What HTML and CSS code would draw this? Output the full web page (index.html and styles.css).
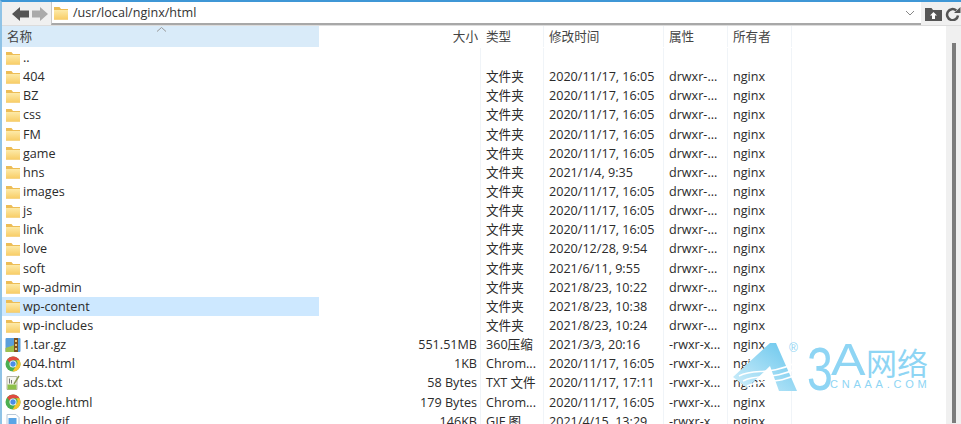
FILE: index.html
```html
<!DOCTYPE html>
<html lang="en">
<head>
    <meta charset="UTF-8">
    <meta name="viewport" content="width=device-width, initial-scale=1.0">
    <title>/usr/local/nginx/html</title>
    <link rel="stylesheet" href="styles.css">
</head>
<body>
    <svg class="defs" width="0" height="0">
        <defs>
            <linearGradient id="folderFill" x1="0" y1="0" x2="0" y2="1">
                <stop offset="0" stop-color="#fdeaa8"/>
                <stop offset="1" stop-color="#f8cd66"/>
            </linearGradient>
            <linearGradient id="logoFill" x1="0" y1="1" x2="1" y2="0">
                <stop offset="0" stop-color="#d4f0fb"/>
                <stop offset="1" stop-color="#63c4ec"/>
            </linearGradient>
            <symbol id="folder" viewBox="0 0 16 16">
                <path d="M1 2h5.500l1.500 2h7v10.500H1z" fill="#edbd55"/>
                <path d="M1 5h14v9.500H1z" fill="url(#folderFill)"/>
            </symbol>
            <symbol id="zip" viewBox="0 0 16 16">
                <rect x="0.500" y="1" width="15" height="14" rx="1" fill="#5a9fdc"/>
                <path d="M0.500 11l9-3v7h-9z" fill="#9cc04e"/>
                <rect x="9" y="1" width="4" height="14" fill="#7d5220"/>
                <rect x="10" y="3" width="2" height="2" fill="#e8c878"/>
                <rect x="10" y="7" width="2" height="2" fill="#e8c878"/>
                <rect x="10" y="11" width="2" height="2" fill="#e8c878"/>
            </symbol>
            <symbol id="chrome" viewBox="0 0 16 16">
                <circle cx="8" cy="8" r="7.500" fill="#4caf50"/>
                <path d="M8 .5a7.500 7.500 0 0 1 6.500 3.750H8a3.750 3.750 0 0 0-3.400 2.200L2.100 3.400A7.500 7.500 0 0 1 8 .5z" fill="#e04a3f"/>
                <path d="M14.500 4.250A7.500 7.500 0 0 1 7.500 15.500l3.300-5.200a3.750 3.750 0 0 0 .4-6.050z" fill="#f7c52d"/>
                <circle cx="8" cy="8" r="3.500" fill="#fff"/>
                <circle cx="8" cy="8" r="2.700" fill="#4a8de8"/>
            </symbol>
            <symbol id="txt" viewBox="0 0 16 16">
                <path d="M2 1.500h10v13H2z" fill="#f5f5ee" stroke="#b5b5a8"/>
                <path d="M2.500 9.500h9v5h-9z" fill="#8cc04a"/>
                <path d="M4.500 3.500v5M6.500 5v3.500" stroke="#777" fill="none"/>
                <path d="M9 9l5-8" stroke="#8a9a50" stroke-width="1.500" fill="none"/>
            </symbol>
            <symbol id="gif" viewBox="0 0 16 16">
                <path d="M2 1.500h9l3 3v10H2z" fill="#fff" stroke="#b8c8d8"/>
                <rect x="3.500" y="5" width="8" height="6" fill="#5aa5e6"/>
            </symbol>
        </defs>
    </svg>

    <div class="window">
        <div class="toolbar">
            <svg class="nav-arrows" width="36" height="14" viewBox="0 0 36 14">
                <path d="M0 7l8-7v3.500h9v7H8V14z" fill="#555"/>
                <path d="M36 7l-8-7v3.500h-8v7h8V14z" fill="#aaa"/>
            </svg>
            <div class="path-box">
                <svg class="icon" width="16" height="16"><use href="#folder"/></svg>
                <span class="path-text">/usr/local/nginx/html</span>
                <svg class="chevron" width="10" height="6" viewBox="0 0 10 6"><path d="M1 1l4 4 4-4" fill="none" stroke="#888"/></svg>
            </div>
            <svg class="tool-icon folder-up" width="17" height="14" viewBox="0 0 17 14">
                <path d="M0 1h6.500l1.500 2h9v11H0z" fill="#555"/>
                <path d="M8.500 5l3.500 3.500H10V12H7V8.500H5z" fill="#fff"/>
            </svg>
            <svg class="tool-icon refresh" width="16" height="14" viewBox="0 0 16 14">
                <path d="M13 8.500a5.500 5.500 0 1 1-1.800-5" fill="none" stroke="#555" stroke-width="2.500"/>
                <path d="M9 6h6.500V0z" fill="#555"/>
            </svg>
        </div>

        <div class="content">
            <div class="list">
                <div class="row head">
                    <div class="cell name sorted">名称<svg class="sort" width="11" height="5" viewBox="0 0 11 5"><path d="M1 4.500l4.500-4 4.500 4" fill="none" stroke="#999"/></svg></div>
                    <div class="cell size">大小</div>
                    <div class="cell">类型</div>
                    <div class="cell">修改时间</div>
                    <div class="cell">属性</div>
                    <div class="cell">所有者</div>
                </div>
                <div class="row"><div class="cell name"><svg class="icon" width="16" height="16"><use href="#folder"/></svg>..</div><div class="cell size"></div><div class="cell"></div><div class="cell"></div><div class="cell"></div><div class="cell"></div></div>
                <div class="row"><div class="cell name"><svg class="icon" width="16" height="16"><use href="#folder"/></svg>404</div><div class="cell size"></div><div class="cell">文件夹</div><div class="cell">2020/11/17, 16:05</div><div class="cell">drwxr-...</div><div class="cell">nginx</div></div>
                <div class="row"><div class="cell name"><svg class="icon" width="16" height="16"><use href="#folder"/></svg>BZ</div><div class="cell size"></div><div class="cell">文件夹</div><div class="cell">2020/11/17, 16:05</div><div class="cell">drwxr-...</div><div class="cell">nginx</div></div>
                <div class="row"><div class="cell name"><svg class="icon" width="16" height="16"><use href="#folder"/></svg>css</div><div class="cell size"></div><div class="cell">文件夹</div><div class="cell">2020/11/17, 16:05</div><div class="cell">drwxr-...</div><div class="cell">nginx</div></div>
                <div class="row"><div class="cell name"><svg class="icon" width="16" height="16"><use href="#folder"/></svg>FM</div><div class="cell size"></div><div class="cell">文件夹</div><div class="cell">2020/11/17, 16:05</div><div class="cell">drwxr-...</div><div class="cell">nginx</div></div>
                <div class="row"><div class="cell name"><svg class="icon" width="16" height="16"><use href="#folder"/></svg>game</div><div class="cell size"></div><div class="cell">文件夹</div><div class="cell">2020/11/17, 16:05</div><div class="cell">drwxr-...</div><div class="cell">nginx</div></div>
                <div class="row"><div class="cell name"><svg class="icon" width="16" height="16"><use href="#folder"/></svg>hns</div><div class="cell size"></div><div class="cell">文件夹</div><div class="cell">2021/1/4, 9:35</div><div class="cell">drwxr-...</div><div class="cell">nginx</div></div>
                <div class="row"><div class="cell name"><svg class="icon" width="16" height="16"><use href="#folder"/></svg>images</div><div class="cell size"></div><div class="cell">文件夹</div><div class="cell">2020/11/17, 16:05</div><div class="cell">drwxr-...</div><div class="cell">nginx</div></div>
                <div class="row"><div class="cell name"><svg class="icon" width="16" height="16"><use href="#folder"/></svg>js</div><div class="cell size"></div><div class="cell">文件夹</div><div class="cell">2020/11/17, 16:05</div><div class="cell">drwxr-...</div><div class="cell">nginx</div></div>
                <div class="row"><div class="cell name"><svg class="icon" width="16" height="16"><use href="#folder"/></svg>link</div><div class="cell size"></div><div class="cell">文件夹</div><div class="cell">2020/11/17, 16:05</div><div class="cell">drwxr-...</div><div class="cell">nginx</div></div>
                <div class="row"><div class="cell name"><svg class="icon" width="16" height="16"><use href="#folder"/></svg>love</div><div class="cell size"></div><div class="cell">文件夹</div><div class="cell">2020/12/28, 9:54</div><div class="cell">drwxr-...</div><div class="cell">nginx</div></div>
                <div class="row"><div class="cell name"><svg class="icon" width="16" height="16"><use href="#folder"/></svg>soft</div><div class="cell size"></div><div class="cell">文件夹</div><div class="cell">2021/6/11, 9:55</div><div class="cell">drwxr-...</div><div class="cell">nginx</div></div>
                <div class="row"><div class="cell name"><svg class="icon" width="16" height="16"><use href="#folder"/></svg>wp-admin</div><div class="cell size"></div><div class="cell">文件夹</div><div class="cell">2021/8/23, 10:22</div><div class="cell">drwxr-...</div><div class="cell">nginx</div></div>
                <div class="row"><div class="cell name selected"><svg class="icon" width="16" height="16"><use href="#folder"/></svg>wp-content</div><div class="cell size"></div><div class="cell">文件夹</div><div class="cell">2021/8/23, 10:38</div><div class="cell">drwxr-...</div><div class="cell">nginx</div></div>
                <div class="row"><div class="cell name"><svg class="icon" width="16" height="16"><use href="#folder"/></svg>wp-includes</div><div class="cell size"></div><div class="cell">文件夹</div><div class="cell">2021/8/23, 10:24</div><div class="cell">drwxr-...</div><div class="cell">nginx</div></div>
                <div class="row"><div class="cell name"><svg class="icon" width="16" height="16"><use href="#zip"/></svg>1.tar.gz</div><div class="cell size">551.51MB</div><div class="cell">360压缩</div><div class="cell">2021/3/3, 20:16</div><div class="cell">-rwxr-x...</div><div class="cell">nginx</div></div>
                <div class="row"><div class="cell name"><svg class="icon" width="16" height="16"><use href="#chrome"/></svg>404.html</div><div class="cell size">1KB</div><div class="cell">Chrom...</div><div class="cell">2020/11/17, 16:05</div><div class="cell">-rwxr-x...</div><div class="cell">nginx</div></div>
                <div class="row"><div class="cell name"><svg class="icon" width="16" height="16"><use href="#txt"/></svg>ads.txt</div><div class="cell size">58 Bytes</div><div class="cell">TXT 文件</div><div class="cell">2020/11/17, 17:11</div><div class="cell">-rwxr-x...</div><div class="cell">nginx</div></div>
                <div class="row"><div class="cell name"><svg class="icon" width="16" height="16"><use href="#chrome"/></svg>google.html</div><div class="cell size">179 Bytes</div><div class="cell">Chrom...</div><div class="cell">2020/11/17, 16:05</div><div class="cell">-rwxr-x...</div><div class="cell">nginx</div></div>
                <div class="row"><div class="cell name"><svg class="icon" width="16" height="16"><use href="#gif"/></svg>hello.gif</div><div class="cell size">146KB</div><div class="cell">GIF 图</div><div class="cell">2021/4/15, 13:29</div><div class="cell">-rwxr-x...</div><div class="cell">nginx</div></div>
            </div>
            <div class="scrollbar"><div class="thumb"></div></div>
        </div>
    </div>

    <!-- watermark sits over the list -->
    <div class="watermark">
        <svg class="wm-logo" width="66" height="50" viewBox="0 0 66 50">
            <path d="M0 35L37 1h6l21 48H46L37 24 14 46z" fill="url(#logoFill)"/>
            <path d="M6 34c16-8 30 0 56-13M10 39c16-8 30 0 54-13M14 44c16-8 30 0 52-13" fill="none" stroke="#fff" stroke-width="1.500"/>
        </svg>
        <span class="wm-reg">®</span>
        <span class="wm-three">3</span>
        <div class="wm-words">
            <div class="wm-title"><span class="wm-a">A</span>网络</div>
            <span class="wm-sub">CNAAA.COM</span>
        </div>
    </div>
</body>
</html>
```

FILE: styles.css
```css
* {
    box-sizing: border-box;
}

body {
    margin: 0;
    width: 961px;
    height: 424px;
    overflow: hidden;
    position: relative;
    background: #fff;
    color: #2b2b2b;
    font-family: "Open Sans", "Noto Sans CJK SC", sans-serif;
    font-size: 12.6px;
}

.defs {
    position: absolute;
}

.window {
    height: 424px;
    display: flex;
    flex-direction: column;
    border-top: 2px solid #3f97d6;
    border-left: 2px solid #8fc3e6;
}

.toolbar {
    height: 24px;
    flex: none;
    display: flex;
    align-items: center;
    background: #f0f0f0;
    border-bottom: 1px solid #dcdcdc;
}

.nav-arrows {
    margin: 0 3px 0 10px;
}

.path-box {
    width: 870px;
    height: 23px;
    display: flex;
    align-items: center;
    padding: 0 6px 0 1px;
    background: #fff;
    border-bottom: 2px solid #a8a8a8;
    border-left: 1px solid #c8c8c8;
}

.path-text {
    flex: 1;
    margin-left: 2px;
    color: #333;
}

.folder-up {
    margin-left: 4px;
}

.refresh {
    margin-left: 3px;
}

.content {
    flex: 1;
    display: flex;
    min-height: 0;
}

.list {
    flex: 1;
    overflow: hidden;
}

.row {
    display: grid;
    grid-template-columns: 317px 162px 63px 120px 64px 64px;
    height: 19.15px;
    line-height: 19px;
}

.row.head {
    height: 21px;
    line-height: 21px;
    margin-bottom: 1px;
    color: #444;
}

.cell {
    padding-left: 5px;
    white-space: nowrap;
    overflow: hidden;
    border-right: 1px solid #f0f4f8;
}

.cell.name {
    display: flex;
    align-items: center;
    position: relative;
    padding-left: 3px;
    border-right: none;
}

.cell.size {
    padding: 0 3px 0 0;
    text-align: right;
}

.head .cell.size {
    border-right: none;
}

.head .cell.name {
    padding-left: 5px;
}

.sorted {
    background: #d9ebf9;
}

.selected {
    background: #cde8ff;
}

.sort {
    position: absolute;
    left: 154px;
    top: 1px;
}

.icon {
    flex: none;
    margin-right: 2px;
}

.scrollbar {
    width: 15px;
    flex: none;
    display: flex;
    justify-content: center;
    padding-top: 17px;
    background: #f0f0f0;
}

.thumb {
    width: 4px;
    height: 380px;
    background: #7c7c7c;
}

.watermark {
    position: absolute;
    left: 733px;
    top: 342px;
    display: flex;
    color: #8ed5f4;
    font-family: "Liberation Sans", "Noto Sans CJK SC", sans-serif;
    pointer-events: none;
}

.wm-reg {
    position: absolute;
    left: 56px;
    top: -1px;
    font-size: 12px;
}

.wm-three {
    flex: none;
    width: 32px;
    margin-left: 8px;
    font-size: 62px;
    line-height: 54px;
    transform: scaleX(.75);
    transform-origin: left;
}

.wm-words {
    display: flex;
    flex-direction: column;
    padding-top: 2px;
    margin-left: -8px;
}

.wm-title {
    display: flex;
    align-items: baseline;
    height: 31px;
    font-size: 31px;
    line-height: 31px;
}

.wm-a {
    width: 35px;
    font-size: 45px;
    transform: scaleX(1.15);
    transform-origin: left;
}

.wm-sub {
    margin-top: 3px;
    margin-left: -1px;
    font-size: 11px;
    line-height: 12px;
    letter-spacing: 3.750px;
}
```
